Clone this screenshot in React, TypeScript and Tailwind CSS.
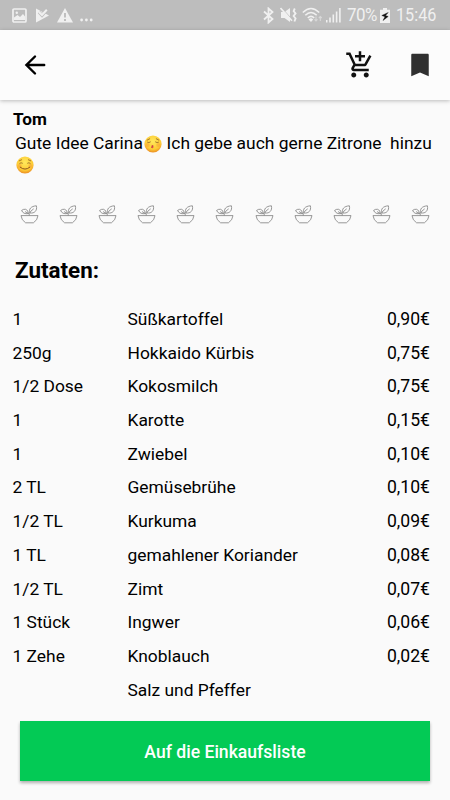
import React from 'react';

type Ingredient = {
    amount: string;
    name: string;
    price: string;
};

const ingredients: Ingredient[] = [
    { amount: '1', name: 'Süßkartoffel', price: '0,90€' },
    { amount: '250g', name: 'Hokkaido Kürbis', price: '0,75€' },
    { amount: '1/2 Dose', name: 'Kokosmilch', price: '0,75€' },
    { amount: '1', name: 'Karotte', price: '0,15€' },
    { amount: '1', name: 'Zwiebel', price: '0,10€' },
    { amount: '2 TL', name: 'Gemüsebrühe', price: '0,10€' },
    { amount: '1/2 TL', name: 'Kurkuma', price: '0,09€' },
    { amount: '1 TL', name: 'gemahlener Koriander', price: '0,08€' },
    { amount: '1/2 TL', name: 'Zimt', price: '0,07€' },
    { amount: '1 Stück', name: 'Ingwer', price: '0,06€' },
    { amount: '1 Zehe', name: 'Knoblauch', price: '0,02€' },
    { amount: '', name: 'Salz und Pfeffer', price: '' },
];

const StatusBar: React.FC = () => (
    <div className="flex h-[30px] items-center bg-[#bdbdbd] pl-3 pr-[13px] text-[#f0f0f0]">
        <svg className="h-[15px] w-[15px]" viewBox="0 0 15 15" fill="none" stroke="currentColor">
            <rect x="1" y="1" width="13" height="13" rx="1" strokeWidth="1.7" />
            <path d="M2 12V9.5L5.5 7L8 9L11 6L13 8.5V12Z" fill="currentColor" stroke="none" />
            <circle cx="4.8" cy="4.8" r="1.2" fill="currentColor" stroke="none" />
        </svg>
        <svg className="ml-[9px] h-[15px] w-[13px]" viewBox="0 0 13 15">
            <path d="M0 0.5L13 7.5L0 14.5Z" fill="currentColor" />
            <path d="M3 4.2L6 7.3L11.5 1.2" fill="none" stroke="#bdbdbd" strokeWidth="3.2" />
            <path d="M3 4L6 7L10.8 1.8" fill="none" stroke="currentColor" strokeWidth="2" />
        </svg>
        <svg className="ml-2 h-[15px] w-4" viewBox="0 0 16 15">
            <path d="M8 0L16 14.5H0Z" fill="currentColor" />
            <path d="M8 5V9.5M8 11V13" stroke="#bdbdbd" strokeWidth="1.9" />
        </svg>
        <svg className="ml-[7px] mt-2.5 h-1 w-[13px]" viewBox="0 0 13 4" fill="currentColor">
            <circle cx="1.6" cy="2" r="1.4" />
            <circle cx="6.4" cy="2" r="1.4" />
            <circle cx="11.2" cy="2" r="1.4" />
        </svg>

        <div className="ml-auto flex items-center">
            <svg className="h-[17px] w-[11px]" viewBox="0 0 11 17" fill="none" stroke="currentColor" strokeWidth="1.8">
                <path d="M1 4.5L9.5 12L5.5 15.5V1.5L9.5 5L1 12.5" />
            </svg>
            <svg className="ml-1.5 h-4 w-[17px]" viewBox="0 0 17 16" fill="none" stroke="currentColor">
                <path d="M1 5H4.5L10 1V15L4.5 11H1Z" fill="currentColor" stroke="none" />
                <path d="M1.2 0.3L12.5 12.8" stroke="#bdbdbd" strokeWidth="1" />
                <path d="M0.5 1L12 13.7" strokeWidth="1.6" />
                <path d="M14.8 1.5L13.6 4L15.6 6.4L13.6 9L15.6 11.4L14.4 14.5" strokeWidth="1.8" />
            </svg>
            <svg className="ml-[5px] h-4 w-[21px]" viewBox="0 0 21 16" fill="none" stroke="currentColor" strokeWidth="1.6">
                <path d="M0.8 5.5Q9 -2.5 17.2 5.5M3.3 8.3Q9 2.7 14.7 8.3M5.8 11Q9 7.8 12.2 11" />
                <path d="M6.5 12.4Q9 10 11.2 12.4L9 15Z" fill="currentColor" stroke="none" />
                <path d="M14 9.5V14M12.5 12.4L14 14L15.5 12.4M18.3 14V9.5M16.8 11L18.3 9.5L19.8 11" stroke="#d8d8d8" strokeWidth="1.1" />
            </svg>
            <svg className="ml-[3px] h-4 w-[15px]" viewBox="0 0 15 16" fill="currentColor">
                <path d="M0 13H1.5V15.5H0ZM3.2 10.5H4.8V15.5H3.2ZM6.5 7.5H8.1V15.5H6.5ZM9.8 4.5H11.4V15.5H9.8ZM13.1 1H14.7V15.5H13.1Z" />
            </svg>
            <span className="ml-1.5 w-[30px] whitespace-nowrap text-[18px] leading-[30px] tracking-[-0.5px]">
                <span className="inline-block origin-left scale-x-[0.94]">70%</span>
            </span>
            <svg className="ml-[3px] h-[15px] w-[10px]" viewBox="0 0 10 15">
                <path d="M3 0H7V1.7H10V15H0V1.7H3Z" fill="currentColor" />
                <path d="M8.2 4.5L1.8 7.5L5 8.7L3 12.5L8.2 8.5L5.5 7.5Z" fill="#111" stroke="#111" strokeWidth="0.4" />
            </svg>
            <span className="ml-[6px] w-[41px] whitespace-nowrap text-[18px] leading-[30px]">
                <span className="inline-block origin-left scale-x-[0.9]">15:46</span>
            </span>
        </div>
    </div>
);

const Toolbar: React.FC = () => (
    <header className="relative flex h-[70px] items-center bg-[#fcfcfc] px-5 shadow-[0_1px_4px_rgba(0,0,0,0.25)]">
        <button aria-label="Zurück">
            <svg className="h-[30px] w-[30px]" viewBox="0 0 30 30" fill="none" stroke="#000" strokeWidth="2.4" strokeLinecap="round">
                <path d="M24.2 15H6.5M15 6.5L6.4 15L15 23.5" />
            </svg>
        </button>
        <button className="ml-auto" aria-label="Zum Einkaufswagen hinzufügen">
            <svg className="h-[30px] w-[30px]" viewBox="0 0 24 24" fill="#111">
                <path d="M11 9h2V6h3V4h-3V1h-2v3H8v2h3v3zm-4 9c-1.1 0-1.99.9-1.99 2S5.9 22 7 22s2-.9 2-2-.9-2-2-2zm10 0c-1.1 0-1.99.9-1.99 2s.89 2 1.99 2 2-.9 2-2-.9-2-2-2zm-9.83-3.25l.03-.12.9-1.63h7.45c.75 0 1.41-.41 1.75-1.03l3.86-7.01L19.42 4h-.01l-1.1 2-2.76 5H8.53l-.13-.27L6.16 6l-.95-2-.94-2H1v2h2l3.6 7.59-1.35 2.45c-.16.28-.25.61-.25.96 0 1.1.9 2 2 2h12v-2H7.42c-.13 0-.25-.11-.25-.25z" />
            </svg>
        </button>
        <button className="-mr-[5px] ml-[30px]" aria-label="Merken">
            <svg className="h-[30px] w-[30px]" viewBox="0 0 24 24" fill="#303030">
                <path d="M18 3H6C5.4 3 5 3.4 5 4V21L12 18L19 21V4C19 3.4 18.6 3 18 3Z" />
            </svg>
        </button>
    </header>
);

const Face: React.FC<{ kiss?: boolean }> = ({ kiss }) => (
    <svg className="mx-[0.7px] inline-block h-[18px] w-[18px] align-[-4px]" viewBox="0 0 18 18" fill="none" strokeLinecap="round">
        <defs>
            <radialGradient id="faceFill" cx="0.5" cy="0.35" r="0.65">
                <stop offset="0" stopColor="#ffe95c" />
                <stop offset="0.7" stopColor="#fdcb35" />
                <stop offset="1" stopColor="#ea8b22" />
            </radialGradient>
        </defs>
        <circle cx="9" cy="9" r="8.6" fill="url(#faceFill)" />
        <circle cx="3.7" cy="10" r="2" fill="#f79438" opacity="0.4" />
        <circle cx="14.3" cy="10" r="2" fill="#f79438" opacity="0.4" />
        {kiss ? (
            <>
                <path d="M3.2 5.1L5.7 3.8M12.3 3.8L14.8 5.1M3.5 7.3Q5 8.2 6.4 7M11.5 7Q13 8.2 14.5 7.3" stroke="#80521f" strokeWidth="0.7" />
                <path d="M8.2 10.3Q10 10.6 9 11.5Q10 12.3 8.2 13L7 12.2L7.8 11.5Z" fill="#df3458" stroke="#b9443a" strokeWidth="0.4" />
            </>
        ) : (
            <>
                <path d="M3.3 4.8L5.6 3.8M12.4 3.8L14.7 4.8M3.7 7.4Q5 6 6.4 7.1M11.6 7.1Q13 6 14.3 7.4" stroke="#80521f" strokeWidth="0.7" />
                <path d="M4.2 11.2Q9 15.2 13.8 11.2" stroke="#81461b" strokeWidth="0.9" />
            </>
        )}
    </svg>
);

const Bowl: React.FC = () => (
    <svg className="h-[19px] w-[19px]" viewBox="0 0 19 19" fill="none" stroke="#858585" strokeWidth="0.85">
        <path d="M1 10.6H18Q17.5 15.3 13.4 17.8H5.6Q1.5 15.3 1 10.6Z" />
        <path d="M9.2 10.5V8.5Q7.5 8.2 5 6.6M9.2 8.5Q10.5 6 13.7 3.8" />
        <path d="M8.3 8.6Q8.6 5.2 5.6 4.3Q3.6 3.9 1.6 5.4Q3.2 9.4 8.3 8.6Z" />
        <path d="M10 8C8.4 4 11 1.2 16.4 0.8C17.4 5.6 14.6 8.6 10 8Z" />
    </svg>
);

const App: React.FC = () => {
    return (
        <div className="flex h-[800px] w-[450px] flex-col overflow-hidden bg-[#fafafa] font-['Roboto',sans-serif] text-black">
            <StatusBar />
            <Toolbar />

            <section className="h-[94px] px-[13px] pt-[9px] text-[17.4px] leading-[21px]">
                <h2 className="text-[17.2px] font-bold">Tom</h2>
                <p className="whitespace-pre pl-0.5 pt-[3px]">
                    Gute Idee Carina<Face kiss /> Ich gebe auch gerne Zitrone  hinzu
                    <br />
                    <Face />
                </p>
            </section>

            <div className="flex h-[41px] items-center justify-between px-5">
                {Array.from({ length: 11 }, (_, i) => (
                    <Bowl key={i} />
                ))}
            </div>

            <h1 className="h-[67.8px] px-[15px] pt-[21px] text-[22.4px] font-bold leading-7">Zutaten:</h1>

            <ul className="text-[17.4px] leading-[33.74px]">
                {ingredients.map((item) => (
                    <li key={item.name} className="flex h-[33.74px] pl-[12.5px] pr-5">
                        <span className="w-[115px]">{item.amount}</span>
                        <span className="flex-1">{item.name}</span>
                        <span className="text-[17.6px]">{item.price}</span>
                    </li>
                ))}
            </ul>

            <button className="mx-5 mt-[13.5px] h-[60px] shrink-0 bg-[#03ca55] pt-[2px] text-[17.6px] font-medium text-white shadow-[0_2px_3px_rgba(0,0,0,0.3)]">
                Auf die Einkaufsliste
            </button>
        </div>
    );
};

export default App;
